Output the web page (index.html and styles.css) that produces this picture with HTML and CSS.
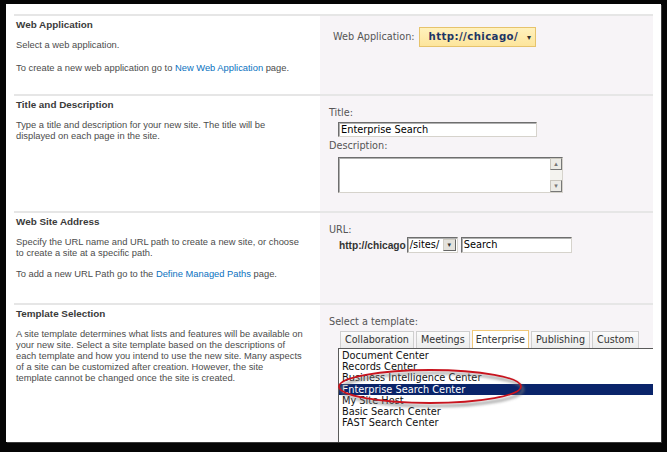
FILE: index.html
```html
<!DOCTYPE html>
<html>
<head>
<meta charset="utf-8">
<link rel="stylesheet" href="styles.css">
</head>
<body>
<div class="frame">
  <div class="row r-app">
    <div class="left">
      <div class="head">Web Application</div>
      <p class="txt">Select a web application.</p>
      <p class="txt gap">To create a new web application go to <span class="link">New Web Application</span> page.</p>
    </div>
    <div class="right app-cell">
      <span class="lbl">Web Application:</span>
      <span class="appbtn">http://chicago/<span class="caret">▾</span></span>
    </div>
  </div>

  <div class="row r-title">
    <div class="left">
      <div class="head">Title and Description</div>
      <p class="txt">Type a title and description for your new site. The title will be<br>displayed on each page in the site.</p>
    </div>
    <div class="right pad">
      <div class="lbl">Title:</div>
      <div class="field title-field">Enterprise Search</div>
      <div class="lbl desc-lbl">Description:</div>
      <div class="field area">
        <div class="area-text"></div>
        <div class="vscroll">
          <span class="sbtn">▴</span>
          <span class="strack"></span>
          <span class="sbtn">▾</span>
        </div>
      </div>
    </div>
  </div>

  <div class="row r-url">
    <div class="left">
      <div class="head">Web Site Address</div>
      <p class="txt">Specify the URL name and URL path to create a new site, or choose<br>to create a site at a specific path.</p>
      <p class="txt gap2">To add a new URL Path go to the <span class="link">Define Managed Paths</span> page.</p>
    </div>
    <div class="right pad">
      <div class="lbl">URL:</div>
      <div class="url-line">
        <span class="host">http://chicago</span>
        <span class="field sel"><span class="sel-text">/sites/</span><span class="sel-btn">▾</span></span>
        <span class="field url-input">Search</span>
      </div>
    </div>
  </div>

  <div class="row r-tpl">
    <div class="left">
      <div class="head">Template Selection</div>
      <p class="txt">A site template determines what lists and features will be available on<br>your new site. Select a site template based on the descriptions of<br>each template and how you intend to use the new site. Many aspects<br>of a site can be customized after creation. However, the site<br>template cannot be changed once the site is created.</p>
    </div>
    <div class="right pad tpl-cell">
      <div class="lbl">Select a template:</div>
      <div class="tabs">
        <span class="tab">Collaboration</span>
        <span class="tab">Meetings</span>
        <span class="tab on">Enterprise</span>
        <span class="tab">Publishing</span>
        <span class="tab">Custom</span>
      </div>
      <div class="listbox">
        <div class="item">Document Center</div>
        <div class="item">Records Center</div>
        <div class="item">Business Intelligence Center</div>
        <div class="item picked">Enterprise Search Center</div>
        <div class="item">My Site Host</div>
        <div class="item">Basic Search Center</div>
        <div class="item">FAST Search Center</div>
      </div>
      <svg class="ring" width="200" height="48" viewBox="0 0 200 48">
        <defs>
          <filter id="blur" x="-10%" y="-30%" width="120%" height="160%">
            <feGaussianBlur stdDeviation="1.4"/>
          </filter>
        </defs>
        <ellipse cx="97" cy="24.5" rx="91" ry="16.5" fill="none" stroke="#7a7a7a" stroke-width="2.2" filter="url(#blur)" opacity="0.8"/>
        <ellipse cx="95" cy="21.5" rx="91" ry="16.5" fill="none" stroke="#c8141e" stroke-width="1.8"/>
      </svg>
    </div>
  </div>
</div>
</body>
</html>
```

FILE: styles.css
```css
html, body {
  margin: 0;
  padding: 0;
  background: #050505;
  width: 667px;
  height: 452px;
  overflow: hidden;
}

.frame {
  margin: 4px 0 0 6px;
  width: 655px;
  height: 438px;
  box-sizing: border-box;
  padding: 10px 8px 0 8px;
  background: #ffffff;
  overflow: hidden;
  box-shadow: 1px 1px 0 #3a3a3a;
}

.row {
  display: grid;
  grid-template-columns: 306px 333px;
  border-top: 2px solid #e6e6e6;
}

.r-app { height: 78px; }
.r-title { height: 115px; }
.r-url { height: 90px; }
.r-tpl { height: 140px; }

.left {
  padding: 2px 0 0 2px;
  font-family: "Liberation Sans", Arial, sans-serif;
  color: #4c4c4c;
}

.head {
  font-weight: bold;
  font-size: 9.9px;
  line-height: 14px;
  color: #3a3a3a;
}

.txt {
  margin: 8px 0 0 0;
  font-size: 9.35px;
  line-height: 11px;
}

.txt.gap { margin-top: 12px; }
.txt.gap2 { margin-top: 10px; }

.link { color: #0a72c0; }

.right {
  background: #f7f4f7;
  font-family: "DejaVu Sans", Verdana, sans-serif;
  overflow: hidden;
}

.pad {
  padding: 11px 0 0 9px;
}

.lbl {
  font-size: 9.7px;
  line-height: 12px;
  color: #555555;
}

.app-cell {
  display: flex;
  align-items: flex-start;
  padding: 11px 0 0 13px;
}

.app-cell .lbl {
  line-height: 20px;
  font-size: 9.7px;
}

.appbtn {
  margin-left: 4px;
  height: 20px;
  box-sizing: border-box;
  width: 117px;
  padding: 0 0 0 9px;
  border: 1px solid #e6c36c;
  background: linear-gradient(#fff1bd, #fde59c);
  font-weight: bold;
  font-size: 10.2px;
  letter-spacing: 0.4px;
  line-height: 18px;
  color: #1d3566;
  white-space: nowrap;
}

.caret {
  font-size: 8px;
  margin-left: 9px;
  letter-spacing: 0;
  color: #333;
}

.field {
  box-sizing: border-box;
  background: #ffffff;
  border: 1px solid #d6d3cc;
  border-top-color: #6e6e6e;
  border-left-color: #6e6e6e;
  box-shadow: inset 1px 1px 0 #b0b0b0;
  font-size: 9.8px;
  color: #000;
}

.title-field {
  margin: 3px 0 0 9px;
  width: 199px;
  height: 15px;
  line-height: 13px;
  padding-left: 2px;
}

.desc-lbl { margin-top: 3px; }

.area {
  margin: 5px 0 0 9px;
  width: 225px;
  height: 36px;
  display: flex;
}

.area-text { flex: 1; }

.vscroll {
  width: 12px;
  display: flex;
  flex-direction: column;
  background: #f0efea;
}

.sbtn {
  height: 12px;
  box-sizing: border-box;
  border: 1px solid #c9c6bd;
  border-right-color: #777;
  border-bottom-color: #777;
  background: #ecebe6;
  font-size: 7px;
  line-height: 10px;
  text-align: center;
  color: #777;
}

.strack { flex: 1; background: #f4f3ef; }

.url-line {
  display: flex;
  align-items: center;
  margin: 1px 0 0 10px;
  height: 16px;
}

.host {
  font-family: "Liberation Sans", Arial, sans-serif;
  font-weight: bold;
  font-size: 10.2px;
  color: #333;
  margin-right: 1px;
}

.sel {
  width: 51px;
  height: 16px;
  display: flex;
  align-items: stretch;
  padding-left: 2px;
}

.sel-text {
  flex: 1;
  line-height: 14px;
}

.sel-btn {
  width: 13px;
  box-sizing: border-box;
  margin: 1px 1px 1px 0;
  border: 1px solid #d0cdc4;
  border-right-color: #666;
  border-bottom-color: #666;
  background: #e4e2dc;
  font-size: 7px;
  line-height: 11px;
  text-align: center;
  color: #333;
}

.url-input {
  margin-left: 3px;
  width: 111px;
  height: 16px;
  line-height: 14px;
  padding-left: 2px;
}

.tpl-cell { position: relative; }

.tabs {
  display: flex;
  gap: 2px;
  margin: 2px 0 0 11px;
  height: 18px;
  align-items: flex-end;
}

.tab {
  box-sizing: border-box;
  height: 17px;
  padding: 0 4px;
  border: 1px solid #cfcfcf;
  border-bottom: none;
  background: linear-gradient(#fbfbfb, #ececec);
  font-size: 9.6px;
  line-height: 16px;
  color: #333;
  white-space: nowrap;
}

.tab.on {
  height: 18px;
  padding: 0 3px;
  background: #ffffff;
  border-color: #f0c879;
  line-height: 17px;
}

.listbox {
  margin-left: 9px;
  width: 330px;
  height: 100px;
  box-sizing: border-box;
  background: #fff;
  border: 1px solid #a0a0a0;
  border-top-color: #5a5a5a;
  border-left-color: #5a5a5a;
  padding-top: 1px;
}

.item {
  font-size: 9.8px;
  line-height: 11.2px;
  padding-left: 3px;
  color: #111;
  white-space: nowrap;
}

.item.picked {
  background: #0a246a;
  color: #ffffff;
}

.ring {
  position: absolute;
  left: 15px;
  top: 60px;
}
```
